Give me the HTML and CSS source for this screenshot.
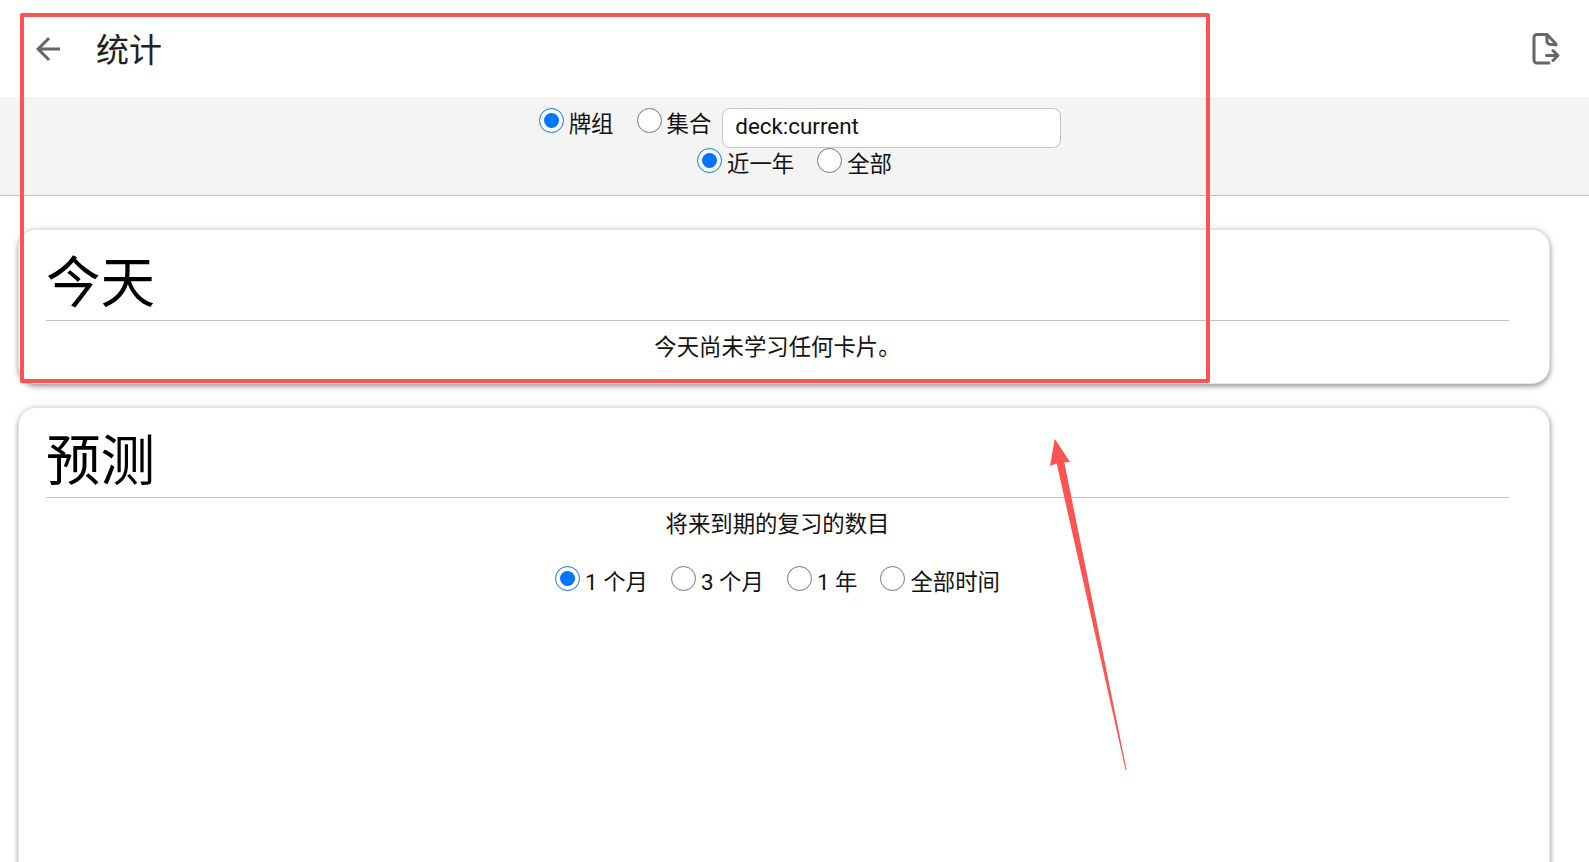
FILE: index.html
```html
<!DOCTYPE html>
<html lang="zh">
<head>
<meta charset="utf-8">
<title>统计</title>
<link rel="stylesheet" href="styles.css">
</head>
<body>
<header class="toolbar">
  <svg class="back-icon" viewBox="0 0 24 24"><path d="M20 11H7.830l5.590-5.590L12 4l-8 8 8 8 1.410-1.410L7.830 13H20v-2z"/></svg>
  <h2 class="page-title">统计</h2>
  <svg class="export-icon" viewBox="0 0 28 32"><path class="export-outline" d="M17 30H5a3 3 0 0 1-3-3V4.500a3 3 0 0 1 3-3h10L24 11v1"/><path class="export-thin" d="M15 2.500V8a3.500 3.500 0 0 0 3.500 3.500H24"/><path class="export-outline" d="M14.500 22.500h11M21 17.500l5 5-5 5"/></svg>
</header>
<section class="filters">
  <div class="filter-row filter-row-search">
    <label class="choice"><input type="radio" name="scope" checked><span>牌组</span></label>
    <label class="choice"><input type="radio" name="scope"><span>集合</span></label>
    <input class="search" type="text" value="deck:current">
  </div>
  <div class="filter-row">
    <label class="choice"><input type="radio" name="range" checked><span>近一年</span></label>
    <label class="choice"><input type="radio" name="range"><span>全部</span></label>
  </div>
</section>
<main class="cards">
  <article class="card card-today">
    <h1 class="card-title">今天</h1>
    <p class="card-text">今天尚未学习任何卡片。</p>
  </article>
  <article class="card card-forecast">
    <h1 class="card-title">预测</h1>
    <p class="card-text">将来到期的复习的数目</p>
    <div class="filter-row range-row">
      <label class="choice"><input type="radio" name="forecast" checked><span>1 个月</span></label>
      <label class="choice"><input type="radio" name="forecast"><span>3 个月</span></label>
      <label class="choice"><input type="radio" name="forecast"><span>1 年</span></label>
      <label class="choice"><input type="radio" name="forecast"><span>全部时间</span></label>
    </div>
  </article>
</main>
<div class="mark-box"></div>
<svg class="mark-arrow" viewBox="0 0 1589 862"><polygon points="1054.700,438.700 1070,462 1064.300,462.300 1126.600,770 1125.600,770 1056.700,463.500 1050,466"/></svg>
</body>
</html>
```
FILE: styles.css
```css
* { box-sizing: border-box; }
html, body { margin: 0; height: 100%; overflow: hidden; background: #fff; }
body { font-family: Roboto, "Noto Sans CJK SC", sans-serif; font-size: 22.4px; color: #111; }

.toolbar { height: 97px; display: flex; align-items: center; padding: 0 29px 0 30px; }
.back-icon { width: 36px; height: 36px; fill: #666; flex: none; }
.page-title { margin: 0 0 2px 30px; font-size: 33px; font-weight: 400; color: #212121; flex: 1; }
.export-icon { width: 28px; height: 32px; flex: none; }
.export-outline { fill: none; stroke: #666; stroke-width: 3; stroke-linecap: round; stroke-linejoin: round; }
.export-thin { fill: none; stroke: #666; stroke-width: 3; stroke-linejoin: round; }

.filters { height: 99px; background: #f4f4f4; border-bottom: 1px solid #c4c4c4; padding-top: 11px; }
.filter-row { display: flex; justify-content: center; gap: 23px; }
.filter-row-search { height: 40px; padding-left: 11px; }
.choice { display: flex; align-items: flex-start; gap: 5px; line-height: 32px; }
.choice input { width: 25px; height: 25px; margin: 0; flex: none; }
.choice span { white-space: nowrap; }
.search { width: 339px; height: 40px; margin-left: -12px; padding: 0 12px 5px; border: 1px solid #c4c4c4; border-radius: 8px; background: #fff; font: inherit; color: #111; outline: none; }

.cards { padding: 33.4px 39px 0 18px; display: flex; flex-direction: column; gap: 22.8px; }
.card { background: #fff; border: 1px solid #e4e4e4; border-radius: 18px; padding: 0 40px 0 27px; box-shadow: 0 3px 5px rgba(0,0,0,.3), 1px 0 4px rgba(0,0,0,.12), 0 0 14px rgba(0,0,0,.05); }
.card-today { height: 155px; }
.card-forecast { height: 800px; }
.card-title { margin: 0; height: 90.2px; border-bottom: 1px solid #c4c4c4; font-size: 54.6px; font-weight: 400; line-height: 106px; color: #000; overflow: hidden; }
.card-text { margin: 10px 0 0; text-align: center; line-height: 32px; }
.range-row { margin-top: 25.6px; }

.mark-box { position: absolute; left: 20px; top: 13px; width: 1190px; height: 370px; border: 4px solid #ff5252; border-radius: 2px; }
.mark-arrow { position: absolute; left: 0; top: 0; width: 1589px; height: 862px; fill: #ff5252; pointer-events: none; }
```
